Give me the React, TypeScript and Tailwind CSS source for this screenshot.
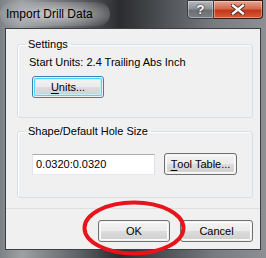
import React from "react";

const font = { fontFamily: '"Segoe UI", "Liberation Sans", Arial, sans-serif' };

function WinButton({
  label,
  mnemonic,
  width,
  focused,
}: {
  label: string;
  mnemonic?: number;
  width: string;
  focused?: boolean;
}) {
  const chars =
    mnemonic === undefined ? (
      label
    ) : (
      <>
        {label.slice(0, mnemonic)}
        <span className="underline underline-offset-2">{label[mnemonic]}</span>
        {label.slice(mnemonic + 1)}
      </>
    );
  return (
    <div
      className={`${width} h-[22px] rounded-[3px] border ${
        focused ? "border-[#3c7fb1]" : "border-[#707070]"
      } p-px`}
    >
      <div
        className={`flex h-full items-center justify-center rounded-[2px] bg-[linear-gradient(#f2f2f2_0%,#ebebeb_50%,#dddddd_50%,#cfcfcf_100%)] ${
          focused
            ? "shadow-[inset_0_0_0_1px_#48d8fb,inset_0_0_0_2px_#c4f0fd]"
            : "shadow-[inset_0_0_0_1px_#fcfcfc]"
        } text-[11px] text-black`}
      >
        {chars}
      </div>
    </div>
  );
}

function GroupBox({
  title,
  className,
  children,
}: {
  title: string;
  className: string;
  children: React.ReactNode;
}) {
  return (
    <fieldset
      className={`rounded-[3px] border border-[#d5dfe5] shadow-[inset_1px_1px_0_#ffffff] ${className}`}
    >
      <legend className="ml-[7px] px-[3px] text-[11px] leading-[14px] text-black">
        {title}
      </legend>
      {children}
    </fieldset>
  );
}

export default function App() {
  return (
    <div
      className="relative h-[258px] w-[266px] overflow-hidden bg-[linear-gradient(90deg,#7c8185_0%,#9da1a4_8%,#5d6064_30%,#2a2c2f_45%,#4a4d51_60%,#777b7f_80%,#8c9094_100%)]"
      style={font}
    >
      {/* title bar */}
      <div className="flex h-[28px] items-start">
        <div className="relative flex h-[28px] flex-1 items-center pl-[6px]">
          <div className="absolute left-0 top-[2px] h-[24px] w-[110px] rounded-full bg-[radial-gradient(ellipse_at_center,rgba(225,225,225,0.75)_0%,rgba(190,190,190,0.45)_55%,rgba(120,120,120,0)_100%)]" />
          <span className="relative text-[12px] text-black">Import Drill Data</span>
        </div>
        <div className="mr-[3px] flex h-[19px]">
          <div className="flex w-[27px] items-center justify-center rounded-bl-[4px] border border-[#3a3c40] bg-[linear-gradient(#b6b9bd_0%,#8e9297_45%,#6b6f74_55%,#7d8186_100%)] shadow-[inset_0_0_0_1px_rgba(255,255,255,0.35)]">
            <span className="text-[13px] font-bold leading-none text-white [text-shadow:0_0_2px_#000]">?</span>
          </div>
          <div className="flex w-[49px] items-center justify-center rounded-br-[4px] border border-l-0 border-[#3a1a14] bg-[linear-gradient(#e8a590_0%,#d46a4e_45%,#c4371c_55%,#d85b35_100%)] shadow-[inset_0_0_0_1px_rgba(255,255,255,0.35)]">
            <svg width="14" height="11" viewBox="0 0 14 11">
              <path
                d="M2 1.5 L12 9.5 M12 1.5 L2 9.5"
                stroke="#3a1a10"
                strokeWidth="4"
                strokeLinecap="square"
              />
              <path
                d="M2 1.5 L12 9.5 M12 1.5 L2 9.5"
                stroke="#ffffff"
                strokeWidth="2.4"
                strokeLinecap="square"
              />
            </svg>
          </div>
        </div>
      </div>

      {/* client */}
      <div className="ml-[5px] mr-[5px] flex h-[222px] flex-col border border-[#3b3e42] bg-[#f0f0f0]">
        <div className="flex flex-1 flex-col gap-[6px] pl-[11px] pr-[7px] pt-[8px]">
          <GroupBox title="Settings" className="h-[81px] pb-[18px]">
            <div className="mt-[4px] pl-[11px] text-[11px] leading-[14px] text-black">
              Start Units: 2.4 Trailing Abs Inch
            </div>
            <div className="mt-[7px] pl-[14px]">
              <WinButton label="Units..." mnemonic={0} width="w-[72px]" focused />
            </div>
          </GroupBox>
          <GroupBox title="Shape/Default Hole Size" className="h-[74px]">
            <div className="mt-[15px] flex items-center gap-[9px] pl-[14px]">
              <div className="flex h-[21px] w-[123px] items-center border border-[#abadb3] border-b-[#e3e9ef] border-l-[#e2e3ea] border-r-[#dbdfe6] bg-white pl-[3px] text-[11px] text-black">
                0.0320:0.0320
              </div>
              <WinButton label="Tool Table..." mnemonic={0} width="w-[73px]" />
            </div>
          </GroupBox>
        </div>
        <div className="h-px bg-[#dfdfdf]" />
        <div className="flex h-[40px] items-start justify-end gap-[10px] pr-[7px] pt-[11px]">
          <WinButton label="OK" width="w-[72px]" />
          <WinButton label="Cancel" width="w-[73px]" />
        </div>
      </div>

      {/* red annotation ellipse */}
      <svg
        className="absolute left-[81px] top-[200px]"
        width="106"
        height="56"
        viewBox="0 0 106 56"
      >
        <ellipse cx="53" cy="28" rx="49.5" ry="25.5" fill="none" stroke="#e8141c" strokeWidth="4" />
      </svg>
    </div>
  );
}
